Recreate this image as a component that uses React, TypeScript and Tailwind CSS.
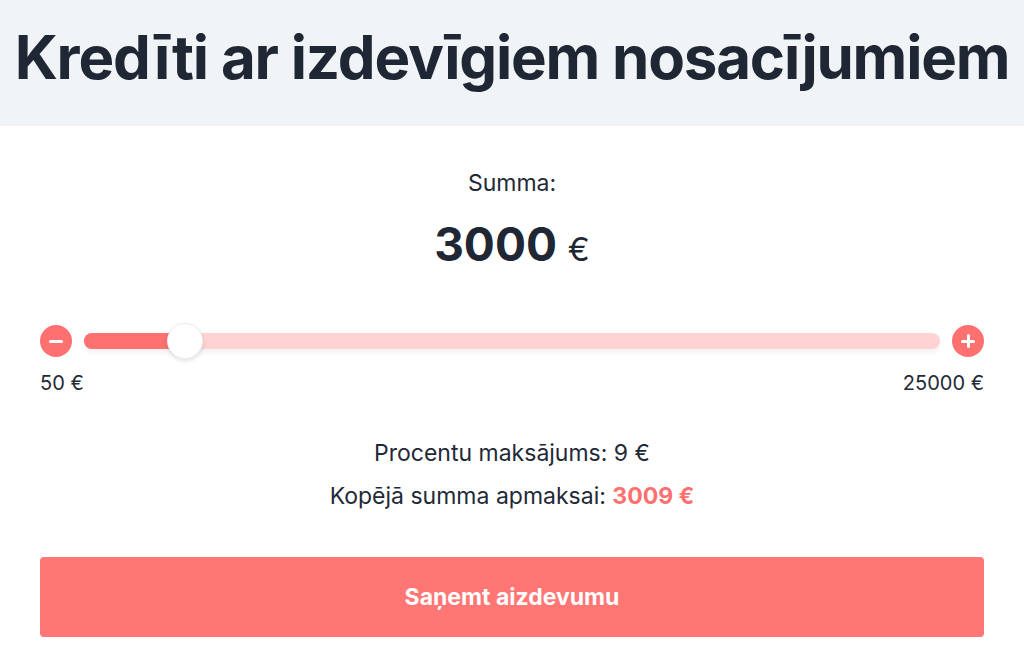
import { useState } from 'react';

const MIN = 50;
const MAX = 25000;

export default function App() {
  const [amount, setAmount] = useState(3000);
  const pct = ((amount - MIN) / (MAX - MIN)) * 100;
  const interest = Math.round(amount * 0.003);

  return (
    <div className="min-h-screen bg-white text-[#1f2937]" style={{ fontFamily: 'Inter, "Noto Sans", sans-serif' }}>
      <header className="flex h-[126px] items-center justify-center overflow-hidden bg-[#f1f4f7] pb-[12px]">
        <h1 className="whitespace-nowrap text-[60px] font-bold tracking-[-1.2px] text-[#1e2733]">
          Kredīti ar izdevīgiem nosacījumiem
        </h1>
      </header>

      <main className="px-10 pt-[42px]">
        <p className="text-center text-[23px] leading-[30px] text-[#1f2937]">Summa:</p>
        <p className="mt-[18px] text-center text-[46px] font-bold leading-[56px] text-[#1e2733]">
          {amount} <span className="text-[33px] font-normal">€</span>
        </p>

        <div className="mt-[48px] flex items-center gap-3">
          <button
            type="button"
            onClick={() => setAmount((a) => Math.max(MIN, a - 50))}
            className="flex h-8 w-8 shrink-0 items-center justify-center rounded-full bg-[#ff7070]"
            aria-label="Samazināt"
          >
            <span className="block h-[3px] w-[14px] rounded bg-white" />
          </button>
          <div className="relative h-4 flex-1 rounded-full bg-[#ffd3d3] shadow-[0_3px_6px_rgba(0,0,0,0.06)]">
            <div className="h-4 rounded-full bg-[#ff7070]" style={{ width: `${pct}%` }} />
            <div
              className="absolute top-1/2 h-9 w-9 -translate-x-1/2 -translate-y-1/2 rounded-full border border-[#eeeeee] bg-white shadow-[0_2px_4px_rgba(0,0,0,0.12)]"
              style={{ left: `${pct}%` }}
            />
          </div>
          <button
            type="button"
            onClick={() => setAmount((a) => Math.min(MAX, a + 50))}
            className="relative flex h-8 w-8 shrink-0 items-center justify-center rounded-full bg-[#ff7070]"
            aria-label="Palielināt"
          >
            <span className="block h-[3px] w-[14px] rounded bg-white" />
            <span className="absolute block h-[14px] w-[3px] rounded bg-white" />
          </button>
        </div>

        <div className="mt-[12px] flex justify-between text-[20px] leading-[28px] text-[#1f2937]">
          <span>50 €</span>
          <span>25000 €</span>
        </div>

        <div className="mt-[41px] text-center text-[23px] leading-[30px] text-[#1f2937]">
          <p>Procentu maksājums: {interest} €</p>
          <p className="mt-[13px]">
            Kopējā summa apmaksai: <span className="font-bold text-[#ff7070]">{amount + interest} €</span>
          </p>
        </div>

        <button
          type="button"
          className="mt-[46px] flex h-[80px] w-full items-center justify-center rounded-[4px] bg-[#ff7675] text-[23px] font-bold text-white"
        >
          Saņemt aizdevumu
        </button>
      </main>
    </div>
  );
}
